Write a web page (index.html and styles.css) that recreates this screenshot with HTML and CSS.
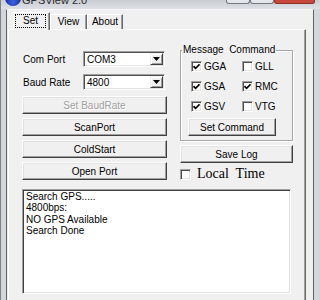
FILE: index.html
```html
<!DOCTYPE html>
<html lang="en">
<head>
    <meta charset="UTF-8">
    <meta name="viewport" content="width=device-width, initial-scale=1.0">
    <title>GPSView 2.0</title>
    <link rel="stylesheet" href="styles.css">
</head>
<body>
    <div class="window">
        <div class="titlebar">
            <span class="app-icon"></span>
            <span class="title">GPSView 2.0</span>
            <div class="caption">
                <span class="cap-btn"></span>
                <span class="cap-btn"></span>
                <span class="cap-btn close"></span>
            </div>
        </div>

        <div class="frame">
            <div class="client">
                <div class="tabs">
                    <div class="tab active"><span class="focus">Set</span></div>
                    <div class="tab">View</div>
                    <div class="tab about">About</div>
                </div>

                <div class="panel">
                    <div class="settings">
                        <div class="port-col">
                            <div class="field">
                                <label>Com Port</label>
                                <div class="combo">
                                    <span class="value">COM3</span>
                                    <span class="drop"><svg width="7" height="4" viewBox="0 0 7 4"><path d="M0 0h7L3.5 4z"/></svg></span>
                                </div>
                            </div>
                            <div class="field">
                                <label>Baud Rate</label>
                                <div class="combo">
                                    <span class="value">4800</span>
                                    <span class="drop"><svg width="7" height="4" viewBox="0 0 7 4"><path d="M0 0h7L3.5 4z"/></svg></span>
                                </div>
                            </div>
                            <button class="btn" disabled>Set BaudRate</button>
                            <button class="btn">ScanPort</button>
                            <button class="btn">ColdStart</button>
                            <button class="btn">Open Port</button>
                        </div>

                        <div class="cmd-col">
                            <fieldset class="group">
                                <legend>Message&nbsp; Command</legend>
                                <div class="checks">
                                    <label class="check"><span class="box"><svg width="7" height="7" viewBox="0 0 7 7"><path d="M0.5 3.2 2.6 5.3 6.5 1.3" fill="none" stroke="#000" stroke-width="1.7"/></svg></span>GGA</label>
                                    <label class="check"><span class="box"></span>GLL</label>
                                    <label class="check"><span class="box"><svg width="7" height="7" viewBox="0 0 7 7"><path d="M0.5 3.2 2.6 5.3 6.5 1.3" fill="none" stroke="#000" stroke-width="1.7"/></svg></span>GSA</label>
                                    <label class="check"><span class="box"><svg width="7" height="7" viewBox="0 0 7 7"><path d="M0.5 3.2 2.6 5.3 6.5 1.3" fill="none" stroke="#000" stroke-width="1.7"/></svg></span>RMC</label>
                                    <label class="check"><span class="box"><svg width="7" height="7" viewBox="0 0 7 7"><path d="M0.5 3.2 2.6 5.3 6.5 1.3" fill="none" stroke="#000" stroke-width="1.7"/></svg></span>GSV</label>
                                    <label class="check"><span class="box"></span>VTG</label>
                                </div>
                                <button class="btn">Set Command</button>
                            </fieldset>
                            <button class="btn save">Save Log</button>
                            <label class="check local"><span class="box"></span>Local&nbsp; Time</label>
                        </div>
                    </div>

                    <div class="log">
                        Search GPS.....<br>
                        4800bps:<br>
                        NO GPS Available<br>
                        Search Done
                    </div>
                </div>
            </div>
        </div>
    </div>
</body>
</html>
```

FILE: styles.css
```css
* {
    box-sizing: border-box;
}

body {
    margin: 0;
    font-family: "Liberation Sans", Arial, sans-serif;
    font-size: 10px;
    color: #000;
}

.window {
    width: 320px;
    height: 300px;
    display: flex;
    flex-direction: column;
    overflow: hidden;
    background: #d3d7dc;
    border-left: 1px solid #7d8288;
}

/* title bar, only its lower edge is in the shot */
.titlebar {
    height: 9px;
    flex: none;
    display: flex;
    overflow: hidden;
    background: linear-gradient(#c9cdd2, #dde0e4);
}

.app-icon {
    flex: none;
    width: 16px;
    height: 16px;
    margin: -10px 0 0 4px;
    border-radius: 50%;
    background: radial-gradient(circle at 50% 75%, #3e62e6, #0f1f8c 70%);
}

.title {
    margin: -6px 0 0 1px;
    font-size: 11px;
    line-height: 12px;
    color: #2a2a2a;
}

.caption {
    display: flex;
    align-self: flex-start;
    margin: 0 5px 0 auto;
}

.cap-btn {
    width: 24px;
    height: 4px;
    background: #e4e8ed;
    border: 1px solid #737a83;
    border-top: none;
    border-radius: 0 0 3px 3px;
}

.cap-btn.close {
    width: 41px;
    background: #c8483d;
    border-color: #8d2f27;
}

.frame {
    flex: 1;
    display: flex;
    min-height: 0;
    padding: 0 6px 0 5px;
}

.client {
    flex: 1;
    display: flex;
    flex-direction: column;
    background: #f0f0f0;
    border: 1px solid #5f6368;
    border-top-color: #f8f8f8;
    border-bottom: none;
}

/* tabs */
.tabs {
    display: flex;
    align-items: flex-end;
    height: 17px;
    margin: 2px 0 0 6px;
}

.tab {
    width: 37px;
    height: 15px;
    border: 1px solid;
    border-color: #fff #696969 transparent #fff;
    border-bottom: none;
    box-shadow: inset -1px 0 #a0a0a0;
    text-align: center;
    line-height: 13px;
}

.tab.about {
    width: 36px;
}

.tab.active {
    position: relative;
    z-index: 1;
    height: 18px;
    margin-bottom: -1px;
    padding: 1px 0 0 1px;
    background: #f0f0f0;
    text-align: left;
}

.focus {
    display: block;
    width: 31px;
    height: 14px;
    border: 1px dotted #000;
    text-align: center;
    line-height: 12px;
}

.panel {
    flex: 1;
    width: 298px;
    margin-left: 1px;
    padding: 14px 12px 0 13px;
    border-top: 1px solid #fff;
    border-left: 1px solid #fff;
    border-right: 1px solid #696969;
    box-shadow: inset -1px 0 #a0a0a0;
}

.settings {
    display: flex;
    gap: 13px;
}

/* left column */
.port-col {
    width: 145px;
    padding-top: 7px;
    display: flex;
    flex-direction: column;
}

.field {
    display: flex;
    align-items: center;
    height: 16px;
    margin-bottom: 7px;
}

.field + .field {
    margin-bottom: 6px;
}

.field label {
    width: 61px;
    padding-left: 1px;
}

.combo {
    width: 82px;
    height: 16px;
    display: flex;
    align-items: center;
    padding: 1px;
    background: #fff;
    border: 1px solid;
    border-color: #a0a0a0 #fff #fff #a0a0a0;
    box-shadow: inset 1px 1px #505050, inset -1px -1px #e3e3e3;
}

.combo .value {
    flex: 1;
    padding-left: 2px;
}

.drop {
    width: 13px;
    height: 12px;
    display: flex;
    align-items: center;
    justify-content: center;
    background: #f0f0f0;
    border: 1px solid;
    border-color: #f0f0f0 #404040 #404040 #f0f0f0;
    box-shadow: inset 1px 1px #fff, inset -1px -1px #a0a0a0;
}

.btn {
    width: 100%;
    height: 18px;
    padding: 0;
    font: inherit;
    color: #000;
    background: #f0f0f0;
    border: 1px solid;
    border-color: #fff #404040 #404040 #fff;
    box-shadow: inset -1px -1px #a0a0a0, inset 1px 1px #e3e3e3;
}

.btn + .btn {
    margin-top: 4px;
}

.btn:disabled {
    color: #a0a0a0;
    text-shadow: 1px 1px #fff;
}

/* right column */
.cmd-col {
    width: 113px;
    display: flex;
    flex-direction: column;
}

.group {
    min-width: 0;
    margin: 0;
    padding: 0 0 4px;
    border: 1px solid #a8a8a8;
    box-shadow: inset 1px 1px #fff, 1px 1px #fff;
}

.group legend {
    margin-left: 1px;
    padding: 0 1px;
    line-height: 12px;
}

.checks {
    display: grid;
    grid-template-columns: 51px auto;
    grid-auto-rows: 20px;
    padding-left: 10px;
}

.check {
    display: flex;
    align-items: center;
    gap: 2px;
}

.box {
    flex: none;
    width: 11px;
    height: 11px;
    display: flex;
    align-items: center;
    justify-content: center;
    background: #fff;
    border: 1px solid;
    border-color: #a0a0a0 #fff #fff #a0a0a0;
    box-shadow: inset 1px 1px #505050, inset -1px -1px #e3e3e3;
}

.group .btn {
    width: 88px;
    margin: 2px 0 0 7px;
}

.save {
    margin-top: 4px;
}

.local {
    height: 16px;
    margin-top: 3px;
    gap: 6px;
    font-family: "Liberation Serif", "Times New Roman", serif;
    font-size: 14px;
}

.log {
    height: 105px;
    margin: 7px 2px 0 0;
    padding: 1px 3px;
    line-height: 11.3px;
    background: #fff;
    border: 1px solid;
    border-color: #a0a0a0 #fff #fff #a0a0a0;
    box-shadow: inset 1px 1px #404040, inset -1px -1px #e3e3e3;
}
```
